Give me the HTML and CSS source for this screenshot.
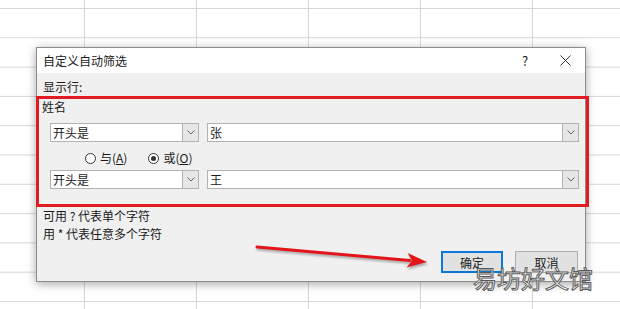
FILE: index.html
```
<!DOCTYPE html>
<html lang="zh-CN">
<head>
    <meta charset="UTF-8">
    <meta name="viewport" content="width=device-width, initial-scale=1.0">
    <title>自定义自动筛选</title>
    <link rel="stylesheet" href="styles.css">
</head>
<body>

    <div class="dialog">
        <div class="titlebar">
            <span class="title">自定义自动筛选</span>
            <span class="help">?</span>
            <span class="close">
                <svg width="11" height="11" viewBox="0 0 11 11"><path d="M0.5 0.5 L10.5 10.5 M10.5 0.5 L0.5 10.5" stroke="#333" stroke-width="1" fill="none"/></svg>
            </span>
        </div>

        <div class="dialog-body">
            <div class="label">显示行:</div>

            <div class="group">
                <div class="group-label">姓名</div>

                <div class="row">
                    <div class="combo op">
                        <span class="value">开头是</span>
                        <span class="drop"><svg width="8" height="5" viewBox="0 0 8 5"><path d="M0.5 0.5 L4 4 L7.5 0.5" stroke="#666" fill="none"/></svg></span>
                    </div>
                    <div class="combo text">
                        <span class="value">张</span>
                        <span class="drop"><svg width="8" height="5" viewBox="0 0 8 5"><path d="M0.5 0.5 L4 4 L7.5 0.5" stroke="#666" fill="none"/></svg></span>
                    </div>
                </div>

                <div class="radios">
                    <span class="radio"></span>
                    <span class="radio-label">与(<u>A</u>)</span>
                    <span class="radio checked"></span>
                    <span class="radio-label">或(<u>O</u>)</span>
                </div>

                <div class="row">
                    <div class="combo op">
                        <span class="value">开头是</span>
                        <span class="drop"><svg width="8" height="5" viewBox="0 0 8 5"><path d="M0.5 0.5 L4 4 L7.5 0.5" stroke="#666" fill="none"/></svg></span>
                    </div>
                    <div class="combo text">
                        <span class="value">王</span>
                        <span class="drop"><svg width="8" height="5" viewBox="0 0 8 5"><path d="M0.5 0.5 L4 4 L7.5 0.5" stroke="#666" fill="none"/></svg></span>
                    </div>
                </div>
            </div>

            <div class="hint">可用 ? 代表单个字符</div>
            <div class="hint">用 * 代表任意多个字符</div>

            <div class="buttons">
                <button class="btn primary">确定</button>
                <button class="btn">取消</button>
            </div>
        </div>
    </div>

    <!-- annotation arrow -->
    <svg class="arrow" width="620" height="309" viewBox="0 0 620 309">
        <line x1="257" y1="247" x2="410" y2="260.5" stroke="#e3151a" stroke-width="3" stroke-linecap="round"/>
        <polygon points="427,262 407.7,253 412,260.7 406.5,267.5" fill="#e3151a"/>
    </svg>

    <div class="watermark">易坊好文馆</div>

</body>
</html>
```

FILE: styles.css
```
html, body {
    margin: 0;
    width: 620px;
    height: 309px;
    overflow: hidden;
}
body {
    position: relative;
    padding-top: 47px;
    box-sizing: border-box;
    font-family: "Noto Sans CJK SC", "Noto Sans", sans-serif;
    font-size: 12px;
    color: #1a1a1a;
    background-color: #fff;
    background-image:
        linear-gradient(to right, #d6d6d6 1px, transparent 1px),
        linear-gradient(to bottom, #d6d6d6 1px, transparent 1px);
    background-size: 112px 29.3px;
    background-position: 84px 8px;
}
.dialog {
    margin-left: 36px;
    width: 550px;
    height: 235px;
    box-sizing: border-box;
    border: 1px solid #8c8c8c;
    background: #f0f0f0;
    box-shadow: 0 2px 9px rgba(0, 0, 0, 0.35);
}
.titlebar {
    height: 25px;
    display: flex;
    align-items: center;
    background: #fff;
    line-height: 25px;
}
.title {
    flex: 1;
    padding-left: 6px;
}
.help {
    width: 20px;
    text-align: center;
    font-size: 13px;
    margin-right: 10px;
}
.close {
    width: 40px;
    display: flex;
    justify-content: center;
    align-items: center;
}
.dialog-body {
    padding: 6px 0 0 0;
}
.label {
    line-height: 16px;
    padding-left: 6px;
}
.group {
    margin: 1px 0 0 -1px;
    width: 553px;
    height: 111px;
    box-sizing: border-box;
    border: 3px solid #e01b22;
    padding-left: 3px;
}
.group-label {
    line-height: 16px;
}
.row {
    display: flex;
    gap: 8px;
    margin-left: 8px;
    margin-top: 8px;
}
.radios + .row {
    margin-top: 4px;
}
.combo {
    height: 19px;
    box-sizing: border-box;
    border: 1px solid #b2b2b2;
    background: #fff;
    display: flex;
    align-items: stretch;
}
.combo.op { width: 149px; }
.combo.text { width: 372px; }
.value {
    flex: 1;
    padding-left: 2px;
    line-height: 17px;
}
.drop {
    width: 15px;
    border-left: 1px solid #b2b2b2;
    background: #e6e6e6;
    display: flex;
    justify-content: center;
    align-items: center;
}
.radios {
    display: flex;
    align-items: center;
    margin: 8px 0 0 43px;
    line-height: 16px;
}
.radio {
    width: 11px;
    height: 11px;
    box-sizing: border-box;
    border: 1px solid #333;
    border-radius: 50%;
    background: #fff;
    display: flex;
    justify-content: center;
    align-items: center;
    margin-right: 4px;
}
.radio.checked::after {
    content: "";
    width: 5px;
    height: 5px;
    border-radius: 50%;
    background: #333;
}
.radio-label {
    margin-right: 21px;
}
.hint {
    line-height: 18px;
    padding-left: 6px;
}
.buttons {
    display: flex;
    justify-content: flex-end;
    gap: 12px;
    margin: 8px 7px 0 0;
}
.btn {
    width: 62px;
    height: 22px;
    box-sizing: border-box;
    border: 1px solid #adadad;
    background: #e1e1e1;
    font-family: inherit;
    font-size: 12px;
    color: #1a1a1a;
    padding: 0;
}
.btn + .btn { width: 63px; }
.btn.primary {
    border: 2px solid #0a78d4;
}
.arrow {
    position: absolute;
    left: 0;
    top: 0;
    pointer-events: none;
    filter: drop-shadow(1px 2px 1px rgba(0, 0, 0, 0.3));
}
.watermark {
    position: absolute;
    left: 473px;
    top: 263px;
    font-size: 24px;
    line-height: 30px;
    color: #fff;
    -webkit-text-stroke: 1px #5a5a5a;
    font-family: "Noto Sans CJK SC", sans-serif;
}
```
